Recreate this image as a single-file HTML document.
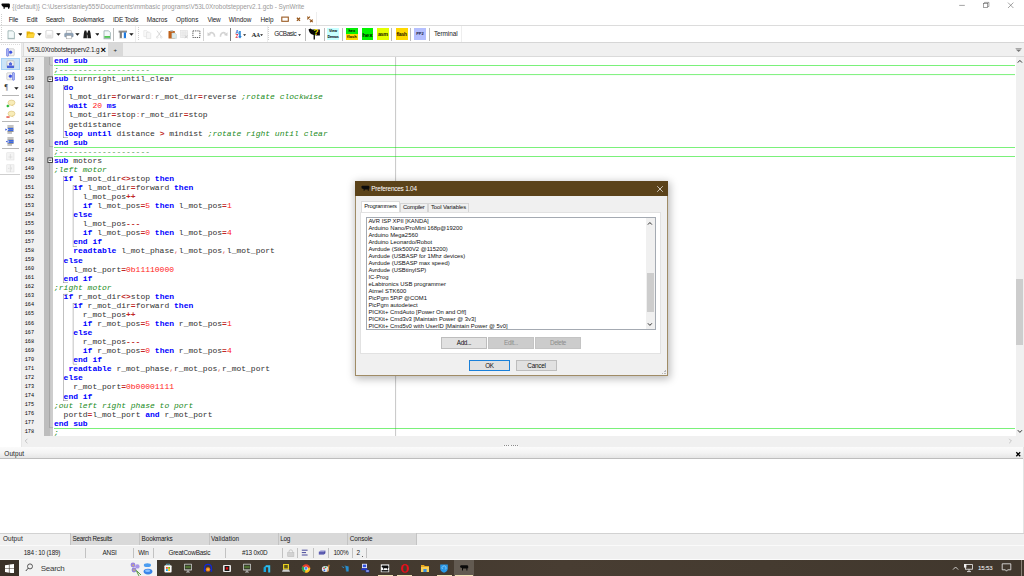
<!DOCTYPE html>
<html><head><meta charset="utf-8"><title>SynWrite</title>
<style>
html,body{margin:0;padding:0;}
body{width:1024px;height:576px;overflow:hidden;background:#fff;position:relative;font-family:"Liberation Sans",sans-serif;}
div,span.t,svg{position:absolute;}
div{box-sizing:border-box;}
span.t{white-space:pre;}
.code span{white-space:pre;}
.k{color:#0000ff;font-weight:bold;}
.c{color:#228b22;font-style:italic;}
.n{color:#ff2020;}
.o{color:#c02828;font-weight:bold;}
.p{color:#e46868;}
.i{color:#303030;}
</style></head><body>
<div style="left:0.00px;top:0.00px;width:1024.00px;height:12.00px;background:#ffffff;"></div>
<svg style="left:1px;top:2.6px" width="9.4" height="6.4" viewBox="0 0 9.4 6.4"><path d="M0.3 1 L1.4 0.4 H8.2 L8.9 1.2 V4.4 H8.3 V5.7 H7 V4.3 H3.8 V5.7 H2.5 V3.9 L1 3 Z" fill="#080808"/></svg>
<span class="t " style="left:12.30px;top:2.56px;font-size:6.4px;line-height:7.68px;color:#9a9a9a;letter-spacing:-0.013px;">{(default)} C:\Users\stanley555\Documents\mmbasic programs\V53L0Xrobotstepperv2.1.gcb - SynWrite</span>
<svg style="left:950px;top:0" width="74" height="12" viewBox="0 0 74 12"><g stroke="#666" stroke-width="0.6" fill="none"><path d="M9.2 5.4 H14.8"/><rect x="33.3" y="3.4" width="4.4" height="4.2"/><path d="M34.5 3.4 V2.4 H38.9 V6.5 H37.7"/><path d="M58 2.6 L63.4 8 M63.4 2.6 L58 8"/></g></svg>
<div style="left:0.00px;top:12.00px;width:1024.00px;height:13.50px;background:#ffffff;"></div>
<div style="left:0.00px;top:25.20px;width:1024.00px;height:0.70px;background:#dcdcdc;"></div>
<div style="left:1.20px;top:14.00px;width:0.60px;height:0.70px;background:#d0d0d0;"></div>
<div style="left:1.20px;top:16.00px;width:0.60px;height:0.70px;background:#d0d0d0;"></div>
<div style="left:1.20px;top:18.00px;width:0.60px;height:0.70px;background:#d0d0d0;"></div>
<div style="left:1.20px;top:20.00px;width:0.60px;height:0.70px;background:#d0d0d0;"></div>
<div style="left:1.20px;top:22.00px;width:0.60px;height:0.70px;background:#d0d0d0;"></div>
<div style="left:1.20px;top:24.00px;width:0.60px;height:0.70px;background:#d0d0d0;"></div>
<span class="t " style="left:8.70px;top:15.66px;font-size:6.4px;line-height:7.68px;color:#1a1a1a;letter-spacing:-0.228px;">File</span>
<span class="t " style="left:26.80px;top:15.66px;font-size:6.4px;line-height:7.68px;color:#1a1a1a;letter-spacing:-0.057px;">Edit</span>
<span class="t " style="left:45.80px;top:15.66px;font-size:6.4px;line-height:7.68px;color:#1a1a1a;letter-spacing:-0.313px;">Search</span>
<span class="t " style="left:72.80px;top:15.66px;font-size:6.4px;line-height:7.68px;color:#1a1a1a;letter-spacing:-0.057px;">Bookmarks</span>
<span class="t " style="left:113.00px;top:15.66px;font-size:6.4px;line-height:7.68px;color:#1a1a1a;letter-spacing:-0.230px;">IDE Tools</span>
<span class="t " style="left:146.80px;top:15.66px;font-size:6.4px;line-height:7.68px;color:#1a1a1a;letter-spacing:-0.080px;">Macros</span>
<span class="t " style="left:176.00px;top:15.66px;font-size:6.4px;line-height:7.68px;color:#1a1a1a;letter-spacing:0.063px;">Options</span>
<span class="t " style="left:207.50px;top:15.66px;font-size:6.4px;line-height:7.68px;color:#1a1a1a;letter-spacing:-0.189px;">View</span>
<span class="t " style="left:228.80px;top:15.66px;font-size:6.4px;line-height:7.68px;color:#1a1a1a;letter-spacing:-0.011px;">Window</span>
<span class="t " style="left:260.50px;top:15.66px;font-size:6.4px;line-height:7.68px;color:#1a1a1a;letter-spacing:-0.041px;">Help</span>
<svg style="left:281px;top:14px" width="36" height="11" viewBox="0 0 36 11"><rect x="0.8" y="3.1" width="6.5" height="4.2" fill="#fff" stroke="#9a5a22" stroke-width="1.1"/><path d="M15.9 3.8 L19 6.9 M19 3.8 L15.9 6.9" stroke="#96561a" stroke-width="1.3"/><path d="M26.3 2.7 L28.9 5.3 M28.9 2.7 L26.3 5.3 M29.1 5.6 L31.7 8.2 M31.7 5.6 L29.1 8.2" stroke="#96561a" stroke-width="1.15"/></svg>
<div style="left:316.00px;top:12.00px;width:1.00px;height:13.00px;background:#eeeeee;"></div>
<div style="left:0.00px;top:26.00px;width:1024.00px;height:16.40px;background:#ffffff;"></div>
<div style="left:0.00px;top:42.00px;width:1024.00px;height:1.00px;background:#d6d6d6;"></div>
<div style="left:1.20px;top:27.00px;width:0.60px;height:0.70px;background:#d0d0d0;"></div>
<div style="left:1.20px;top:29.00px;width:0.60px;height:0.70px;background:#d0d0d0;"></div>
<div style="left:1.20px;top:31.00px;width:0.60px;height:0.70px;background:#d0d0d0;"></div>
<div style="left:1.20px;top:33.00px;width:0.60px;height:0.70px;background:#d0d0d0;"></div>
<div style="left:1.20px;top:35.00px;width:0.60px;height:0.70px;background:#d0d0d0;"></div>
<div style="left:1.20px;top:37.00px;width:0.60px;height:0.70px;background:#d0d0d0;"></div>
<div style="left:1.20px;top:39.00px;width:0.60px;height:0.70px;background:#d0d0d0;"></div>
<div style="left:137.50px;top:27.00px;width:0.60px;height:0.70px;background:#d0d0d0;"></div>
<div style="left:137.50px;top:29.00px;width:0.60px;height:0.70px;background:#d0d0d0;"></div>
<div style="left:137.50px;top:31.00px;width:0.60px;height:0.70px;background:#d0d0d0;"></div>
<div style="left:137.50px;top:33.00px;width:0.60px;height:0.70px;background:#d0d0d0;"></div>
<div style="left:137.50px;top:35.00px;width:0.60px;height:0.70px;background:#d0d0d0;"></div>
<div style="left:137.50px;top:37.00px;width:0.60px;height:0.70px;background:#d0d0d0;"></div>
<div style="left:137.50px;top:39.00px;width:0.60px;height:0.70px;background:#d0d0d0;"></div>
<div style="left:135.00px;top:26.00px;width:1.00px;height:16.00px;background:#eeeeee;"></div>
<div style="left:268.30px;top:27.00px;width:0.60px;height:0.70px;background:#d0d0d0;"></div>
<div style="left:268.30px;top:29.00px;width:0.60px;height:0.70px;background:#d0d0d0;"></div>
<div style="left:268.30px;top:31.00px;width:0.60px;height:0.70px;background:#d0d0d0;"></div>
<div style="left:268.30px;top:33.00px;width:0.60px;height:0.70px;background:#d0d0d0;"></div>
<div style="left:268.30px;top:35.00px;width:0.60px;height:0.70px;background:#d0d0d0;"></div>
<div style="left:268.30px;top:37.00px;width:0.60px;height:0.70px;background:#d0d0d0;"></div>
<div style="left:268.30px;top:39.00px;width:0.60px;height:0.70px;background:#d0d0d0;"></div>
<div style="left:266.50px;top:26.00px;width:1.00px;height:16.00px;background:#eeeeee;"></div>
<div style="left:113.30px;top:28.00px;width:0.70px;height:12.50px;background:#bcbcbc;"></div>
<div style="left:304.50px;top:28.00px;width:0.70px;height:12.50px;background:#bcbcbc;"></div>
<div style="left:323.50px;top:28.00px;width:0.70px;height:12.50px;background:#bcbcbc;"></div>
<div style="left:342.00px;top:28.00px;width:0.70px;height:12.50px;background:#bcbcbc;"></div>
<div style="left:391.30px;top:28.00px;width:0.70px;height:12.50px;background:#bcbcbc;"></div>
<div style="left:410.20px;top:28.00px;width:0.70px;height:12.50px;background:#bcbcbc;"></div>
<div style="left:428.80px;top:28.00px;width:0.70px;height:12.50px;background:#bcbcbc;"></div>
<div style="left:202.50px;top:28.00px;width:0.70px;height:12.50px;background:#d2d2d2;"></div>
<div style="left:230.10px;top:28.00px;width:0.70px;height:12.50px;background:#808080;"></div>
<svg style="left:17.60px;top:33.00px" width="4.8" height="3" viewBox="0 0 4.8 3"><path d="M0.2 0.3 H4.6 L2.4 2.7 Z" fill="#1a1a1a"/></svg>
<svg style="left:36.80px;top:33.00px" width="4.8" height="3" viewBox="0 0 4.8 3"><path d="M0.2 0.3 H4.6 L2.4 2.7 Z" fill="#1a1a1a"/></svg>
<svg style="left:56.00px;top:33.00px" width="4.8" height="3" viewBox="0 0 4.8 3"><path d="M0.2 0.3 H4.6 L2.4 2.7 Z" fill="#1a1a1a"/></svg>
<svg style="left:75.20px;top:33.00px" width="4.8" height="3" viewBox="0 0 4.8 3"><path d="M0.2 0.3 H4.6 L2.4 2.7 Z" fill="#1a1a1a"/></svg>
<svg style="left:94.50px;top:33.00px" width="4.8" height="3" viewBox="0 0 4.8 3"><path d="M0.2 0.3 H4.6 L2.4 2.7 Z" fill="#1a1a1a"/></svg>
<svg style="left:129.00px;top:33.00px" width="4.8" height="3" viewBox="0 0 4.8 3"><path d="M0.2 0.3 H4.6 L2.4 2.7 Z" fill="#1a1a1a"/></svg>
<svg style="left:243.40px;top:33.50px" width="3.2" height="2" viewBox="0 0 3.2 2"><path d="M0.1 0.2 H3.1 L1.6 1.9 Z" fill="#1a1a1a"/></svg>
<svg style="left:260.00px;top:33.50px" width="3.2" height="2" viewBox="0 0 3.2 2"><path d="M0.1 0.2 H3.1 L1.6 1.9 Z" fill="#1a1a1a"/></svg>
<svg style="left:298.20px;top:33.50px" width="3.2" height="2" viewBox="0 0 3.2 2"><path d="M0.1 0.2 H3.1 L1.6 1.9 Z" fill="#1a1a1a"/></svg>
<div style="left:461.00px;top:26.00px;width:1.00px;height:16.00px;background:#eeeeee;"></div>
<svg style="left:6.50px;top:29.50px" width="9" height="10" viewBox="0 0 9 10"><path d="M1 0.8 H5.6 L7.4 2.6 V8.4 H1 Z" fill="#f2f9f9" stroke="#86a2a2" stroke-width="0.7"/><path d="M0.4 8.8 H8" stroke="#9cb0b0" stroke-width="0.7"/></svg>
<svg style="left:25.50px;top:30.00px" width="10" height="9" viewBox="0 0 10 9"><path d="M0.6 1.4 H3.6 L4.4 2.2 H7.6 V7.6 H0.6 Z" fill="#e8b000"/><path d="M0.6 7.6 L2.2 3.6 H8.8 L7.6 7.6 Z" fill="#ffd83a" stroke="#d9a400" stroke-width="0.3"/></svg>
<svg style="left:44.50px;top:30.00px" width="9" height="9" viewBox="0 0 9 9"><rect x="0.8" y="0.6" width="7" height="7.4" rx="0.6" fill="#f4f4f4" stroke="#c8c8c8" stroke-width="0.6"/><rect x="2.2" y="5" width="4.2" height="3" fill="#e2e2e2"/><rect x="2" y="0.9" width="4.6" height="2.6" fill="#ffffff"/></svg>
<svg style="left:63.50px;top:29.50px" width="10" height="10" viewBox="0 0 10 10"><rect x="2.6" y="0.8" width="4.6" height="3" fill="#fff" stroke="#999" stroke-width="0.5"/><rect x="0.6" y="3.2" width="8.6" height="3.8" rx="0.8" fill="#8fa3b8" stroke="#70839a" stroke-width="0.4"/><rect x="2.4" y="5.6" width="5" height="3.2" fill="#fff" stroke="#999" stroke-width="0.5"/></svg>
<svg style="left:83.30px;top:29.60px" width="9" height="9" viewBox="0 0 9 9"><path d="M0.3 8.2 L0.9 3 L1.6 0.5 H3.3 L3.9 3 V8.2 Z M4.5 8.2 V3 L5.1 0.5 H6.8 L7.5 3 L8.1 8.2 Z" fill="#1c1c1c"/><rect x="3.4" y="2.8" width="1.6" height="2.4" fill="#333"/></svg>
<svg style="left:102.50px;top:29.50px" width="9" height="10" viewBox="0 0 9 10"><path d="M1 0.8 H5.6 L7.4 2.6 V8.4 H1 Z" fill="#f2f9f9" stroke="#86a2a2" stroke-width="0.7"/><rect x="1.4" y="6.3" width="5.6" height="1.3" fill="#10b010"/><path d="M0.4 8.8 H8" stroke="#9cb0b0" stroke-width="0.7"/></svg>
<svg style="left:117.60px;top:29.60px" width="10" height="9" viewBox="0 0 10 9"><path d="M0.6 0.6 H9 V2.6 H0.6 Z" fill="#8c8c8c"/><rect x="1.7" y="2" width="2.2" height="6.2" fill="#7e7e7e"/><rect x="5.8" y="2.4" width="2.2" height="5.8" fill="#1e7ae0"/><path d="M0.8 8.4 H8.8" stroke="#dcdcdc" stroke-width="0.5"/></svg>
<svg style="left:142.50px;top:29.80px" width="9" height="9.4" viewBox="0 0 9 9.4"><path d="M0.8 0.6 H3.8 L5 1.8 V6.6 H0.8 Z" fill="#fafafa" stroke="#dcdcdc" stroke-width="0.5"/><path d="M3.4 2.2 H6.6 L7.8 3.4 V8.6 H3.4 Z" fill="#f6f6f6" stroke="#d6d6d6" stroke-width="0.5"/></svg>
<svg style="left:155.80px;top:29.80px" width="7" height="9" viewBox="0 0 7 9"><path d="M0.9 0.6 L5 6.4 M5.6 0.6 L1.6 6.4" stroke="#cfcfcf" stroke-width="0.8" fill="none"/><circle cx="1.3" cy="7.2" r="0.9" fill="none" stroke="#d4d4d4" stroke-width="0.6"/><circle cx="5.2" cy="7.2" r="0.9" fill="none" stroke="#d4d4d4" stroke-width="0.6"/></svg>
<svg style="left:167.50px;top:29.50px" width="9.4" height="9.6" viewBox="0 0 9.4 9.6"><rect x="0.5" y="0.9" width="6.4" height="7.6" rx="0.5" fill="#c0621a"/><rect x="2.3" y="0.3" width="2.8" height="1.3" fill="#aab4b8"/><path d="M3.8 3 H7 L8.4 4.4 V8.4 H3.8 Z" fill="#dcebeb" stroke="#a9bcbc" stroke-width="0.4"/></svg>
<svg style="left:179.50px;top:29.80px" width="9" height="9.2" viewBox="0 0 9 9.2"><rect x="0.6" y="0.6" width="7" height="7" fill="#f0f0f0" stroke="#dadada" stroke-width="0.5"/><path d="M0.6 3 H7.6 M0.6 5.4 H7.6 M3 0.6 V7.6 M5.4 0.6 V7.6" stroke="#e0e0e0" stroke-width="0.4"/><path d="M4.8 5.6 L7.8 8.2 M7.8 5.6 L4.8 8.2" stroke="#c4c4c4" stroke-width="0.7"/></svg>
<svg style="left:191.60px;top:29.80px" width="9" height="8.6" viewBox="0 0 9 8.6"><rect x="0.9" y="0.9" width="7" height="6.6" fill="#fff" stroke="#333" stroke-width="0.8" stroke-dasharray="1.3 0.9"/></svg>
<svg style="left:206.60px;top:30.40px" width="9" height="8" viewBox="0 0 9 8"><path d="M7.6 6.8 C7.8 2.8 4.6 1.6 2.4 3.6" fill="none" stroke="#d4d4d4" stroke-width="1.6"/><path d="M0.4 2.2 L0.6 6 L4.2 5 Z" fill="#d0d0d0"/></svg>
<svg style="left:219.00px;top:30.40px" width="9" height="8" viewBox="0 0 9 8"><path d="M1.4 6.8 C1.2 2.8 4.4 1.6 6.6 3.6" fill="none" stroke="#d4d4d4" stroke-width="1.6"/><path d="M8.6 2.2 L8.4 6 L4.8 5 Z" fill="#d0d0d0"/></svg>
<svg style="left:235.00px;top:29.60px" width="8" height="9" viewBox="0 0 8 9"><rect x="4.2" y="1" width="1.5" height="6" fill="#1878d0"/><path d="M3.2 6.2 H6.8 L5 8.4 Z" fill="#1878d0"/></svg>
<span class="t " style="left:235.20px;top:29.00px;font-size:5.0px;line-height:6.00px;color:#1a6fd0;font-weight:bold;">A</span>
<span class="t " style="left:235.40px;top:33.00px;font-size:5.0px;line-height:6.00px;color:#d8283c;font-weight:bold;">Z</span>
<span class="t" style="left:251.6px;top:29.9px;font-size:6.8px;line-height:9px;font-family:'Liberation Serif',serif;font-weight:bold;color:#222;letter-spacing:-0.2px">A<span style="font-size:5.2px">A</span></span>
<span class="t " style="left:274.20px;top:30.36px;font-size:6.4px;line-height:7.68px;color:#222;letter-spacing:-0.464px;">GCBasic</span>
<svg style="left:308.40px;top:28.20px" width="13" height="12" viewBox="0 0 13 12"><path d="M0.5 1.4 L2.4 0.6 L4 1.5 H11.9 V7.4 H8.2 L6.9 6.9 V11.5 H5.6 V6.9 L3 5.9 L1.5 4.2 Z" fill="#050505"/></svg>
<span class="t " style="left:313.60px;top:27.88px;font-size:8.2px;line-height:9.84px;color:#f4e400;font-weight:bold;">?</span>
<div style="left:327.00px;top:28.00px;width:12.00px;height:12.00px;background:#c6ffff;"></div>
<span class="t " style="left:329.00px;top:28.92px;font-size:3.8px;line-height:4.56px;color:#000;letter-spacing:-0.098px;font-weight:bold;">View</span>
<span class="t " style="left:327.50px;top:34.52px;font-size:3.8px;line-height:4.56px;color:#000;letter-spacing:-0.294px;font-weight:bold;">Demos</span>
<div style="left:345.90px;top:28.00px;width:12.10px;height:6.40px;background:#04ee04;"></div>
<div style="left:345.90px;top:34.40px;width:12.10px;height:5.60px;background:#ffd800;"></div>
<span class="t " style="left:348.40px;top:28.86px;font-size:3.9px;line-height:4.68px;color:#000;letter-spacing:0.093px;font-weight:bold;">hex</span>
<span class="t " style="left:347.00px;top:34.66px;font-size:3.9px;line-height:4.68px;color:#000;letter-spacing:0.139px;font-weight:bold;">flash</span>
<div style="left:361.50px;top:28.00px;width:11.90px;height:12.00px;background:#00f400;"></div>
<span class="t " style="left:362.20px;top:30.58px;font-size:6.2px;line-height:7.44px;color:#022002;letter-spacing:-0.128px;font-weight:bold;">hex</span>
<div style="left:376.90px;top:28.00px;width:12.00px;height:12.00px;background:#e4ff00;"></div>
<span class="t " style="left:377.90px;top:30.96px;font-size:5.4px;line-height:6.48px;color:#1a2000;letter-spacing:-0.336px;font-weight:bold;">asm</span>
<div style="left:395.60px;top:28.00px;width:12.10px;height:12.00px;background:#ffd800;"></div>
<span class="t " style="left:396.60px;top:31.52px;font-size:4.8px;line-height:5.76px;color:#1a1000;letter-spacing:-0.201px;font-weight:bold;">flash</span>
<div style="left:414.20px;top:28.00px;width:11.90px;height:12.00px;background:#b4bfff;"></div>
<span class="t " style="left:416.20px;top:32.20px;font-size:4.0px;line-height:4.80px;color:#1c2044;letter-spacing:0.013px;font-weight:bold;">PP2</span>
<span class="t " style="left:434.00px;top:30.36px;font-size:6.4px;line-height:7.68px;color:#222;letter-spacing:-0.086px;">Terminal</span>
<div style="left:0.00px;top:42.80px;width:1024.00px;height:13.60px;background:#f0f0f0;"></div>
<div style="left:22.00px;top:56.00px;width:1002.00px;height:1.00px;background:#dadada;"></div>
<div style="left:24.00px;top:43.00px;width:84.00px;height:13.00px;background:#f4f4f4;"></div>
<span class="t " style="left:27.00px;top:46.36px;font-size:6.4px;line-height:7.68px;color:#1a1a1a;letter-spacing:-0.152px;">V53L0Xrobotstepperv2.1.g</span>
<span class="t " style="left:100.60px;top:44.46px;font-size:9.4px;line-height:11.28px;color:#000;font-weight:bold;">×</span>
<div style="left:108.00px;top:43.00px;width:14.60px;height:13.00px;background:#d9d9d9;"></div>
<span class="t " style="left:113.60px;top:46.70px;font-size:6px;line-height:7.20px;color:#222;">+</span>
<svg style="left:1015.40px;top:47.60px" width="8" height="5" viewBox="0 0 8 5"><path d="M0.6 0.5 H6.6" stroke="#777" stroke-width="0.6"/><path d="M0.8 1.4 H6.4 L3.6 4 Z" fill="#777"/></svg>
<div style="left:0.00px;top:42.80px;width:21.40px;height:404.00px;background:#ffffff;"></div>
<div style="left:21.00px;top:43.00px;width:1.00px;height:404.00px;background:#e6e6e6;"></div>
<div style="left:22.00px;top:43.00px;width:2.00px;height:13.00px;background:#ececec;"></div>
<div style="left:23.00px;top:43.00px;width:1.00px;height:13.40px;background:#dcdcdc;"></div>
<div style="left:1.20px;top:44.00px;width:0.80px;height:1.00px;background:#dcdcdc;"></div>
<div style="left:3.20px;top:44.00px;width:0.80px;height:1.00px;background:#dcdcdc;"></div>
<div style="left:5.20px;top:44.00px;width:0.80px;height:1.00px;background:#dcdcdc;"></div>
<div style="left:7.20px;top:44.00px;width:0.80px;height:1.00px;background:#dcdcdc;"></div>
<div style="left:9.20px;top:44.00px;width:0.80px;height:1.00px;background:#dcdcdc;"></div>
<div style="left:11.20px;top:44.00px;width:0.80px;height:1.00px;background:#dcdcdc;"></div>
<div style="left:13.20px;top:44.00px;width:0.80px;height:1.00px;background:#dcdcdc;"></div>
<div style="left:15.20px;top:44.00px;width:0.80px;height:1.00px;background:#dcdcdc;"></div>
<div style="left:17.20px;top:44.00px;width:0.80px;height:1.00px;background:#dcdcdc;"></div>
<div style="left:19.20px;top:44.00px;width:0.80px;height:1.00px;background:#dcdcdc;"></div>
<div style="left:1.30px;top:58.40px;width:18.80px;height:11.70px;background:#cce4f7;border:0.6px solid #a8d2f5;"></div>
<svg style="left:6.00px;top:48.00px" width="9" height="9" viewBox="0 0 9 9"><rect x="1.6" y="0.8" width="6.6" height="7" rx="0.8" fill="#f2f2f2" stroke="#b8b8b8" stroke-width="0.6"/><rect x="0.6" y="0.6" width="1.8" height="7.6" rx="0.6" fill="#b8c4f8" stroke="#4a5ad8" stroke-width="0.6"/><path d="M3.2 3 H4.6 V2 L6.6 4.3 L4.6 6.6 V5.6 H3.2 Z" fill="#3a50e0"/></svg>
<svg style="left:6.00px;top:60.10px" width="9" height="9" viewBox="0 0 9 9"><rect x="1" y="0.8" width="7" height="7" rx="0.8" fill="#f2f2f2" stroke="#b0b0b0" stroke-width="0.6"/><rect x="1" y="5.6" width="7" height="2.4" fill="#4a62d8"/><path d="M3 5.4 V3.8 H2.4 L4.5 2 L6.6 3.8 H6 V5.4 Z" fill="#5468dc"/></svg>
<svg style="left:6.00px;top:71.70px" width="9" height="9" viewBox="0 0 9 9"><rect x="0.8" y="0.8" width="6.6" height="7" rx="0.8" fill="#f2f2f2" stroke="#b8b8b8" stroke-width="0.6"/><rect x="6.6" y="0.6" width="1.8" height="7.6" rx="0.6" fill="#b8c4f8" stroke="#4a5ad8" stroke-width="0.6"/><path d="M5.8 3 H4.4 V2 L2.4 4.3 L4.4 6.6 V5.6 H5.8 Z" fill="#3a50e0"/></svg>
<span class="t" style="left:4.6px;top:82.6px;font-size:7.6px;line-height:10px;font-family:'Liberation Serif',serif;color:#333">¶</span>
<svg style="left:14.20px;top:86.50px" width="4.8" height="3" viewBox="0 0 4.8 3"><path d="M0.2 0.3 H4.6 L2.4 2.7 Z" fill="#1a1a1a"/></svg>
<div style="left:2.20px;top:95.40px;width:17.00px;height:0.70px;background:#b8b8b8;"></div>
<div style="left:2.20px;top:121.30px;width:17.00px;height:0.70px;background:#b8b8b8;"></div>
<div style="left:2.20px;top:148.00px;width:17.00px;height:0.70px;background:#b8b8b8;"></div>
<svg style="left:4.60px;top:98.60px" width="11" height="10" viewBox="0 0 11 10"><ellipse cx="6.5" cy="3.7" rx="3.5" ry="2.6" fill="#f8ecb8" stroke="#d0b468" stroke-width="0.5"/><path d="M7.4 5.8 L8.8 7.6 L5.8 6.2 Z" fill="#e4cc84"/><path d="M1.2 6.9 L2.9 5.4 L4.6 6.9 L2.9 8.4 Z" fill="#22b830"/></svg>
<svg style="left:4.60px;top:109.60px" width="11" height="10" viewBox="0 0 11 10"><ellipse cx="6.5" cy="3.7" rx="3.5" ry="2.6" fill="#f8ecb8" stroke="#d0b468" stroke-width="0.5"/><path d="M7.4 5.8 L8.8 7.6 L5.8 6.2 Z" fill="#e4cc84"/><rect x="1.4" y="6.4" width="3.2" height="1.3" fill="#e03a28"/></svg>
<svg style="left:5.00px;top:124.70px" width="10" height="9.4" viewBox="0 0 10 9.4"><path d="M2.4 1 H8.6 M2.4 2.8 H8.6 M3.8 4.6 H8.6 M2.4 6.4 H8.6 M2.4 8 H7" stroke="#555" stroke-width="0.7"/><path d="M2.8 3.6 H8.4 M2.8 5.4 H8.4" stroke="#3a68e8" stroke-width="1.1"/><path d="M0.4 3.4 L2.2 4.6 L0.4 5.8 Z" fill="#2a4ad0"/></svg>
<svg style="left:5.00px;top:136.60px" width="10" height="9.4" viewBox="0 0 10 9.4"><path d="M2.4 1 H8.6 M2.4 2.8 H8.6 M3.8 4.6 H8.6 M2.4 6.4 H8.6 M2.4 8 H7" stroke="#555" stroke-width="0.7"/><path d="M3.4 3.6 H8.6 M3.4 5.4 H8.6" stroke="#3a68e8" stroke-width="1.1"/><path d="M2.6 3.4 L0.8 4.6 L2.6 5.8 Z" fill="#2a4ad0"/></svg>
<svg style="left:6.00px;top:151.80px" width="9" height="9" viewBox="0 0 9 9"><rect x="0.8" y="0.8" width="7.2" height="7.2" fill="#f4f4f4" stroke="#dadada" stroke-width="0.5"/><path d="M4.4 2 V6.6 M2.4 5 H6.4" stroke="#d4d4d4" stroke-width="0.6"/></svg>
<svg style="left:6.00px;top:163.60px" width="9" height="9" viewBox="0 0 9 9"><rect x="0.8" y="0.8" width="7.2" height="7.2" fill="#f4f4f4" stroke="#dadada" stroke-width="0.5"/><path d="M4.4 0.8 V8 M2 4.4 H3.4 M5.4 3.4 V5.4" stroke="#d4d4d4" stroke-width="0.6"/></svg>
<div style="left:0.00px;top:174.00px;width:19.60px;height:0.60px;background:#cfcfcf;"></div>
<div style="left:22.10px;top:56.60px;width:22.30px;height:379.40px;background:#f0f0f0;"></div>
<div style="left:44.40px;top:56.60px;width:5.20px;height:379.40px;background:#bdbdbd;"></div>
<div style="left:49.60px;top:56.60px;width:3.20px;height:379.40px;background:#cdcdcd;"></div>
<div style="left:52.80px;top:56.60px;width:962.60px;height:379.40px;background:#ffffff;"></div>
<div style="left:395.00px;top:56.60px;width:1.00px;height:379.40px;background:rgba(150,150,150,0.495);"></div>
<div style="left:396.00px;top:56.60px;width:1.00px;height:379.40px;background:rgba(150,150,150,0.045);"></div>
<div style="left:1015.50px;top:56.60px;width:8.50px;height:379.40px;background:#f0f0f0;"></div>
<div style="left:1016.00px;top:279.00px;width:7.40px;height:65.60px;background:#cdcdcd;"></div>
<svg style="left:1016.60px;top:58.80px" width="6" height="5" viewBox="0 0 6 5"><path d="M0.8 3.6 L2.9 1.4 L5 3.6" fill="none" stroke="#333" stroke-width="1"/></svg>
<svg style="left:1016.60px;top:428.80px" width="6" height="5" viewBox="0 0 6 5"><path d="M0.8 1.2 L2.9 3.4 L5 1.2" fill="none" stroke="#333" stroke-width="1"/></svg>
<span class="t" style="left:24.7px;top:57.60px;font-size:5.2px;line-height:7px;font-family:'Liberation Mono',monospace;color:#000;letter-spacing:0.02px">137</span>
<span class="t code" style="left:54.00px;top:56.05px;font-size:8px;line-height:9.0667px;font-family:'Liberation Mono',monospace;"><span class="k">end sub</span></span>
<div style="left:54.00px;top:65.00px;width:961.20px;height:1.00px;background:rgba(0,228,0,0.520);"></div>
<span class="t" style="left:24.7px;top:66.67px;font-size:5.2px;line-height:7px;font-family:'Liberation Mono',monospace;color:#000;letter-spacing:0.02px">138</span>
<span class="t code" style="left:54.00px;top:65.12px;font-size:8px;line-height:9.0667px;font-family:'Liberation Mono',monospace;"><span class="c">;-------------------</span></span>
<div style="left:54.00px;top:74.00px;width:961.20px;height:1.00px;background:rgba(0,228,0,0.477);"></div>
<div style="left:54.00px;top:75.00px;width:961.20px;height:1.00px;background:rgba(0,228,0,0.043);"></div>
<span class="t" style="left:24.7px;top:75.73px;font-size:5.2px;line-height:7px;font-family:'Liberation Mono',monospace;color:#000;letter-spacing:0.02px">139</span>
<span class="t code" style="left:54.00px;top:74.18px;font-size:8px;line-height:9.0667px;font-family:'Liberation Mono',monospace;"><span class="k">sub</span><span class="i"> turnright_until_clear</span></span>
<span class="t" style="left:24.7px;top:84.80px;font-size:5.2px;line-height:7px;font-family:'Liberation Mono',monospace;color:#000;letter-spacing:0.02px">140</span>
<span class="t code" style="left:63.60px;top:83.25px;font-size:8px;line-height:9.0667px;font-family:'Liberation Mono',monospace;"><span class="k">do</span></span>
<span class="t" style="left:24.7px;top:93.87px;font-size:5.2px;line-height:7px;font-family:'Liberation Mono',monospace;color:#000;letter-spacing:0.02px">141</span>
<span class="t code" style="left:68.40px;top:92.32px;font-size:8px;line-height:9.0667px;font-family:'Liberation Mono',monospace;"><span class="i">l_mot_dir</span><span class="o">=</span><span class="i">forward</span><span class="p">:</span><span class="i">r_mot_dir</span><span class="o">=</span><span class="i">reverse </span><span class="c">;rotate clockwise</span></span>
<span class="t" style="left:24.7px;top:102.93px;font-size:5.2px;line-height:7px;font-family:'Liberation Mono',monospace;color:#000;letter-spacing:0.02px">142</span>
<span class="t code" style="left:68.40px;top:101.38px;font-size:8px;line-height:9.0667px;font-family:'Liberation Mono',monospace;"><span class="k">wait </span><span class="n">20</span><span class="k"> ms</span></span>
<span class="t" style="left:24.7px;top:112.00px;font-size:5.2px;line-height:7px;font-family:'Liberation Mono',monospace;color:#000;letter-spacing:0.02px">143</span>
<span class="t code" style="left:68.40px;top:110.45px;font-size:8px;line-height:9.0667px;font-family:'Liberation Mono',monospace;"><span class="i">l_mot_dir</span><span class="o">=</span><span class="i">stop</span><span class="p">:</span><span class="i">r_mot_dir</span><span class="o">=</span><span class="i">stop</span></span>
<span class="t" style="left:24.7px;top:121.07px;font-size:5.2px;line-height:7px;font-family:'Liberation Mono',monospace;color:#000;letter-spacing:0.02px">144</span>
<span class="t code" style="left:68.40px;top:119.52px;font-size:8px;line-height:9.0667px;font-family:'Liberation Mono',monospace;"><span class="i">getdistance</span></span>
<span class="t" style="left:24.7px;top:130.13px;font-size:5.2px;line-height:7px;font-family:'Liberation Mono',monospace;color:#000;letter-spacing:0.02px">145</span>
<span class="t code" style="left:63.60px;top:128.58px;font-size:8px;line-height:9.0667px;font-family:'Liberation Mono',monospace;"><span class="k">loop until</span><span class="i"> distance </span><span class="o">&gt;</span><span class="i"> mindist </span><span class="c">;rotate right until clear</span></span>
<span class="t" style="left:24.7px;top:139.20px;font-size:5.2px;line-height:7px;font-family:'Liberation Mono',monospace;color:#000;letter-spacing:0.02px">146</span>
<span class="t code" style="left:54.00px;top:137.65px;font-size:8px;line-height:9.0667px;font-family:'Liberation Mono',monospace;"><span class="k">end sub</span></span>
<div style="left:54.00px;top:147.00px;width:961.20px;height:1.00px;background:rgba(0,228,0,0.520);"></div>
<span class="t" style="left:24.7px;top:148.27px;font-size:5.2px;line-height:7px;font-family:'Liberation Mono',monospace;color:#000;letter-spacing:0.02px">147</span>
<span class="t code" style="left:54.00px;top:146.72px;font-size:8px;line-height:9.0667px;font-family:'Liberation Mono',monospace;"><span class="c">;-------------------</span></span>
<div style="left:54.00px;top:156.00px;width:961.20px;height:1.00px;background:rgba(0,228,0,0.520);"></div>
<span class="t" style="left:24.7px;top:157.33px;font-size:5.2px;line-height:7px;font-family:'Liberation Mono',monospace;color:#000;letter-spacing:0.02px">148</span>
<span class="t code" style="left:54.00px;top:155.78px;font-size:8px;line-height:9.0667px;font-family:'Liberation Mono',monospace;"><span class="k">sub</span><span class="i"> motors</span></span>
<span class="t" style="left:24.7px;top:166.40px;font-size:5.2px;line-height:7px;font-family:'Liberation Mono',monospace;color:#000;letter-spacing:0.02px">149</span>
<span class="t code" style="left:54.00px;top:164.85px;font-size:8px;line-height:9.0667px;font-family:'Liberation Mono',monospace;"><span class="c">;left motor</span></span>
<span class="t" style="left:24.7px;top:175.47px;font-size:5.2px;line-height:7px;font-family:'Liberation Mono',monospace;color:#000;letter-spacing:0.02px">150</span>
<span class="t code" style="left:63.60px;top:173.92px;font-size:8px;line-height:9.0667px;font-family:'Liberation Mono',monospace;"><span class="k">if</span><span class="i"> l_mot_dir</span><span class="o">&lt;&gt;</span><span class="i">stop </span><span class="k">then</span></span>
<span class="t" style="left:24.7px;top:184.53px;font-size:5.2px;line-height:7px;font-family:'Liberation Mono',monospace;color:#000;letter-spacing:0.02px">151</span>
<span class="t code" style="left:73.20px;top:182.98px;font-size:8px;line-height:9.0667px;font-family:'Liberation Mono',monospace;"><span class="k">if</span><span class="i"> l_mot_dir</span><span class="o">=</span><span class="i">forward </span><span class="k">then</span></span>
<span class="t" style="left:24.7px;top:193.60px;font-size:5.2px;line-height:7px;font-family:'Liberation Mono',monospace;color:#000;letter-spacing:0.02px">152</span>
<span class="t code" style="left:82.80px;top:192.05px;font-size:8px;line-height:9.0667px;font-family:'Liberation Mono',monospace;"><span class="i">l_mot_pos</span><span class="o">++</span></span>
<span class="t" style="left:24.7px;top:202.67px;font-size:5.2px;line-height:7px;font-family:'Liberation Mono',monospace;color:#000;letter-spacing:0.02px">153</span>
<span class="t code" style="left:82.80px;top:201.12px;font-size:8px;line-height:9.0667px;font-family:'Liberation Mono',monospace;"><span class="k">if</span><span class="i"> l_mot_pos</span><span class="o">=</span><span class="n">5</span><span class="k"> then</span><span class="i"> l_mot_pos</span><span class="o">=</span><span class="n">1</span></span>
<span class="t" style="left:24.7px;top:211.73px;font-size:5.2px;line-height:7px;font-family:'Liberation Mono',monospace;color:#000;letter-spacing:0.02px">154</span>
<span class="t code" style="left:73.20px;top:210.18px;font-size:8px;line-height:9.0667px;font-family:'Liberation Mono',monospace;"><span class="k">else</span></span>
<span class="t" style="left:24.7px;top:220.80px;font-size:5.2px;line-height:7px;font-family:'Liberation Mono',monospace;color:#000;letter-spacing:0.02px">155</span>
<span class="t code" style="left:82.80px;top:219.25px;font-size:8px;line-height:9.0667px;font-family:'Liberation Mono',monospace;"><span class="i">l_mot_pos</span><span class="o">---</span></span>
<span class="t" style="left:24.7px;top:229.87px;font-size:5.2px;line-height:7px;font-family:'Liberation Mono',monospace;color:#000;letter-spacing:0.02px">156</span>
<span class="t code" style="left:82.80px;top:228.32px;font-size:8px;line-height:9.0667px;font-family:'Liberation Mono',monospace;"><span class="k">if</span><span class="i"> l_mot_pos</span><span class="o">=</span><span class="n">0</span><span class="k"> then</span><span class="i"> l_mot_pos</span><span class="o">=</span><span class="n">4</span></span>
<span class="t" style="left:24.7px;top:238.93px;font-size:5.2px;line-height:7px;font-family:'Liberation Mono',monospace;color:#000;letter-spacing:0.02px">157</span>
<span class="t code" style="left:73.20px;top:237.38px;font-size:8px;line-height:9.0667px;font-family:'Liberation Mono',monospace;"><span class="k">end if</span></span>
<span class="t" style="left:24.7px;top:248.00px;font-size:5.2px;line-height:7px;font-family:'Liberation Mono',monospace;color:#000;letter-spacing:0.02px">158</span>
<span class="t code" style="left:73.20px;top:246.45px;font-size:8px;line-height:9.0667px;font-family:'Liberation Mono',monospace;"><span class="k">readtable</span><span class="i"> l_mot_phase</span><span class="p">,</span><span class="i">l_mot_pos</span><span class="p">,</span><span class="i">l_mot_port</span></span>
<span class="t" style="left:24.7px;top:257.07px;font-size:5.2px;line-height:7px;font-family:'Liberation Mono',monospace;color:#000;letter-spacing:0.02px">159</span>
<span class="t code" style="left:63.60px;top:255.52px;font-size:8px;line-height:9.0667px;font-family:'Liberation Mono',monospace;"><span class="k">else</span></span>
<span class="t" style="left:24.7px;top:266.13px;font-size:5.2px;line-height:7px;font-family:'Liberation Mono',monospace;color:#000;letter-spacing:0.02px">160</span>
<span class="t code" style="left:73.20px;top:264.58px;font-size:8px;line-height:9.0667px;font-family:'Liberation Mono',monospace;"><span class="i">l_mot_port</span><span class="o">=</span><span class="n">0b11110000</span></span>
<span class="t" style="left:24.7px;top:275.20px;font-size:5.2px;line-height:7px;font-family:'Liberation Mono',monospace;color:#000;letter-spacing:0.02px">161</span>
<span class="t code" style="left:63.60px;top:273.65px;font-size:8px;line-height:9.0667px;font-family:'Liberation Mono',monospace;"><span class="k">end if</span></span>
<span class="t" style="left:24.7px;top:284.27px;font-size:5.2px;line-height:7px;font-family:'Liberation Mono',monospace;color:#000;letter-spacing:0.02px">162</span>
<span class="t code" style="left:54.00px;top:282.72px;font-size:8px;line-height:9.0667px;font-family:'Liberation Mono',monospace;"><span class="c">;right motor</span></span>
<span class="t" style="left:24.7px;top:293.33px;font-size:5.2px;line-height:7px;font-family:'Liberation Mono',monospace;color:#000;letter-spacing:0.02px">163</span>
<span class="t code" style="left:63.60px;top:291.78px;font-size:8px;line-height:9.0667px;font-family:'Liberation Mono',monospace;"><span class="k">if</span><span class="i"> r_mot_dir</span><span class="o">&lt;&gt;</span><span class="i">stop </span><span class="k">then</span></span>
<span class="t" style="left:24.7px;top:302.40px;font-size:5.2px;line-height:7px;font-family:'Liberation Mono',monospace;color:#000;letter-spacing:0.02px">164</span>
<span class="t code" style="left:73.20px;top:300.85px;font-size:8px;line-height:9.0667px;font-family:'Liberation Mono',monospace;"><span class="k">if</span><span class="i"> r_mot_dir</span><span class="o">=</span><span class="i">forward </span><span class="k">then</span></span>
<span class="t" style="left:24.7px;top:311.47px;font-size:5.2px;line-height:7px;font-family:'Liberation Mono',monospace;color:#000;letter-spacing:0.02px">165</span>
<span class="t code" style="left:82.80px;top:309.92px;font-size:8px;line-height:9.0667px;font-family:'Liberation Mono',monospace;"><span class="i">r_mot_pos</span><span class="o">++</span></span>
<span class="t" style="left:24.7px;top:320.53px;font-size:5.2px;line-height:7px;font-family:'Liberation Mono',monospace;color:#000;letter-spacing:0.02px">166</span>
<span class="t code" style="left:82.80px;top:318.98px;font-size:8px;line-height:9.0667px;font-family:'Liberation Mono',monospace;"><span class="k">if</span><span class="i"> r_mot_pos</span><span class="o">=</span><span class="n">5</span><span class="k"> then</span><span class="i"> r_mot_pos</span><span class="o">=</span><span class="n">1</span></span>
<span class="t" style="left:24.7px;top:329.60px;font-size:5.2px;line-height:7px;font-family:'Liberation Mono',monospace;color:#000;letter-spacing:0.02px">167</span>
<span class="t code" style="left:73.20px;top:328.05px;font-size:8px;line-height:9.0667px;font-family:'Liberation Mono',monospace;"><span class="k">else</span></span>
<span class="t" style="left:24.7px;top:338.67px;font-size:5.2px;line-height:7px;font-family:'Liberation Mono',monospace;color:#000;letter-spacing:0.02px">168</span>
<span class="t code" style="left:82.80px;top:337.12px;font-size:8px;line-height:9.0667px;font-family:'Liberation Mono',monospace;"><span class="i">r_mot_pos</span><span class="o">---</span></span>
<span class="t" style="left:24.7px;top:347.73px;font-size:5.2px;line-height:7px;font-family:'Liberation Mono',monospace;color:#000;letter-spacing:0.02px">169</span>
<span class="t code" style="left:82.80px;top:346.18px;font-size:8px;line-height:9.0667px;font-family:'Liberation Mono',monospace;"><span class="k">if</span><span class="i"> r_mot_pos</span><span class="o">=</span><span class="n">0</span><span class="k"> then</span><span class="i"> r_mot_pos</span><span class="o">=</span><span class="n">4</span></span>
<span class="t" style="left:24.7px;top:356.80px;font-size:5.2px;line-height:7px;font-family:'Liberation Mono',monospace;color:#000;letter-spacing:0.02px">170</span>
<span class="t code" style="left:73.20px;top:355.25px;font-size:8px;line-height:9.0667px;font-family:'Liberation Mono',monospace;"><span class="k">end if</span></span>
<span class="t" style="left:24.7px;top:365.87px;font-size:5.2px;line-height:7px;font-family:'Liberation Mono',monospace;color:#000;letter-spacing:0.02px">171</span>
<span class="t code" style="left:68.40px;top:364.32px;font-size:8px;line-height:9.0667px;font-family:'Liberation Mono',monospace;"><span class="k">readtable</span><span class="i"> r_mot_phase</span><span class="p">,</span><span class="i">r_mot_pos</span><span class="p">,</span><span class="i">r_mot_port</span></span>
<span class="t" style="left:24.7px;top:374.93px;font-size:5.2px;line-height:7px;font-family:'Liberation Mono',monospace;color:#000;letter-spacing:0.02px">172</span>
<span class="t code" style="left:63.60px;top:373.38px;font-size:8px;line-height:9.0667px;font-family:'Liberation Mono',monospace;"><span class="k">else</span></span>
<span class="t" style="left:24.7px;top:384.00px;font-size:5.2px;line-height:7px;font-family:'Liberation Mono',monospace;color:#000;letter-spacing:0.02px">173</span>
<span class="t code" style="left:73.20px;top:382.45px;font-size:8px;line-height:9.0667px;font-family:'Liberation Mono',monospace;"><span class="i">r_mot_port</span><span class="o">=</span><span class="n">0b00001111</span></span>
<span class="t" style="left:24.7px;top:393.07px;font-size:5.2px;line-height:7px;font-family:'Liberation Mono',monospace;color:#000;letter-spacing:0.02px">174</span>
<span class="t code" style="left:63.60px;top:391.52px;font-size:8px;line-height:9.0667px;font-family:'Liberation Mono',monospace;"><span class="k">end if</span></span>
<span class="t" style="left:24.7px;top:402.13px;font-size:5.2px;line-height:7px;font-family:'Liberation Mono',monospace;color:#000;letter-spacing:0.02px">175</span>
<span class="t code" style="left:54.00px;top:400.58px;font-size:8px;line-height:9.0667px;font-family:'Liberation Mono',monospace;"><span class="c">;out left right phase to port</span></span>
<span class="t" style="left:24.7px;top:411.20px;font-size:5.2px;line-height:7px;font-family:'Liberation Mono',monospace;color:#000;letter-spacing:0.02px">176</span>
<span class="t code" style="left:63.60px;top:409.65px;font-size:8px;line-height:9.0667px;font-family:'Liberation Mono',monospace;"><span class="i">portd</span><span class="o">=</span><span class="i">l_mot_port </span><span class="k">and</span><span class="i"> r_mot_port</span></span>
<span class="t" style="left:24.7px;top:420.27px;font-size:5.2px;line-height:7px;font-family:'Liberation Mono',monospace;color:#000;letter-spacing:0.02px">177</span>
<span class="t code" style="left:54.00px;top:418.72px;font-size:8px;line-height:9.0667px;font-family:'Liberation Mono',monospace;"><span class="k">end sub</span></span>
<div style="left:54.00px;top:428.00px;width:961.20px;height:1.00px;background:rgba(0,228,0,0.520);"></div>
<span class="t" style="left:24.7px;top:429.33px;font-size:5.2px;line-height:7px;font-family:'Liberation Mono',monospace;color:#000;letter-spacing:0.02px">178</span>
<span class="t code" style="left:54.00px;top:427.78px;font-size:8px;line-height:9.0667px;font-family:'Liberation Mono',monospace;"><span class="c">;</span></span>
<svg style="left:46.60px;top:75.67px" width="6.4" height="6.4" viewBox="0 0 6.4 6.4"><rect x="0.9" y="0.9" width="4.6" height="4.6" fill="#fff" stroke="#333" stroke-width="0.9"/><path d="M2 3.2 H4.4" stroke="#111" stroke-width="0.8"/></svg>
<svg style="left:46.60px;top:157.27px" width="6.4" height="6.4" viewBox="0 0 6.4 6.4"><rect x="0.9" y="0.9" width="4.6" height="4.6" fill="#fff" stroke="#333" stroke-width="0.9"/><path d="M2 3.2 H4.4" stroke="#111" stroke-width="0.8"/></svg>
<div style="left:49.00px;top:56.60px;width:1.00px;height:8.87px;background:rgba(130,130,130,0.356);"></div>
<div style="left:50.00px;top:56.60px;width:1.00px;height:8.87px;background:rgba(130,130,130,0.056);"></div>
<div style="left:49.60px;top:64.00px;width:3.00px;height:1.00px;background:rgba(130,130,130,0.081);"></div>
<div style="left:49.60px;top:65.00px;width:3.00px;height:1.00px;background:rgba(130,130,130,0.331);"></div>
<div style="left:49.00px;top:81.67px;width:1.00px;height:65.40px;background:rgba(130,130,130,0.356);"></div>
<div style="left:50.00px;top:81.67px;width:1.00px;height:65.40px;background:rgba(130,130,130,0.056);"></div>
<div style="left:49.60px;top:146.00px;width:3.00px;height:1.00px;background:rgba(130,130,130,0.381);"></div>
<div style="left:49.60px;top:147.00px;width:3.00px;height:1.00px;background:rgba(130,130,130,0.032);"></div>
<div style="left:49.00px;top:163.27px;width:1.00px;height:264.87px;background:rgba(130,130,130,0.356);"></div>
<div style="left:50.00px;top:163.27px;width:1.00px;height:264.87px;background:rgba(130,130,130,0.056);"></div>
<div style="left:49.60px;top:427.00px;width:3.00px;height:1.00px;background:rgba(130,130,130,0.330);"></div>
<div style="left:49.60px;top:428.00px;width:3.00px;height:1.00px;background:rgba(130,130,130,0.082);"></div>
<div style="left:63.00px;top:85.40px;width:1.00px;height:52.40px;background:rgba(140,140,140,0.540);"></div>
<div style="left:63.20px;top:85.00px;width:4.60px;height:1.00px;background:rgba(140,140,140,0.540);"></div>
<div style="left:63.20px;top:137.00px;width:4.60px;height:1.00px;background:rgba(140,140,140,0.540);"></div>
<div style="left:63.00px;top:176.07px;width:1.00px;height:106.80px;background:rgba(140,140,140,0.540);"></div>
<div style="left:63.20px;top:176.00px;width:4.60px;height:1.00px;background:rgba(140,140,140,0.540);"></div>
<div style="left:63.20px;top:282.00px;width:4.60px;height:1.00px;background:rgba(140,140,140,0.540);"></div>
<div style="left:72.00px;top:185.13px;width:1.00px;height:61.47px;background:rgba(140,140,140,0.180);"></div>
<div style="left:73.00px;top:185.13px;width:1.00px;height:61.47px;background:rgba(140,140,140,0.360);"></div>
<div style="left:72.80px;top:185.00px;width:4.60px;height:1.00px;background:rgba(140,140,140,0.540);"></div>
<div style="left:72.80px;top:246.00px;width:4.60px;height:1.00px;background:rgba(140,140,140,0.540);"></div>
<div style="left:63.00px;top:293.93px;width:1.00px;height:106.80px;background:rgba(140,140,140,0.540);"></div>
<div style="left:63.20px;top:293.00px;width:4.60px;height:1.00px;background:rgba(140,140,140,0.059);"></div>
<div style="left:63.20px;top:294.00px;width:4.60px;height:1.00px;background:rgba(140,140,140,0.481);"></div>
<div style="left:63.20px;top:400.00px;width:4.60px;height:1.00px;background:rgba(140,140,140,0.540);"></div>
<div style="left:72.00px;top:303.00px;width:1.00px;height:61.47px;background:rgba(140,140,140,0.180);"></div>
<div style="left:73.00px;top:303.00px;width:1.00px;height:61.47px;background:rgba(140,140,140,0.360);"></div>
<div style="left:72.80px;top:303.00px;width:4.60px;height:1.00px;background:rgba(140,140,140,0.540);"></div>
<div style="left:72.80px;top:363.00px;width:4.60px;height:1.00px;background:rgba(140,140,140,0.119);"></div>
<div style="left:72.80px;top:364.00px;width:4.60px;height:1.00px;background:rgba(140,140,140,0.421);"></div>
<div style="left:22.10px;top:436.00px;width:1001.90px;height:11.20px;background:#f0f0f0;"></div>
<svg style="left:24.00px;top:437.60px" width="5" height="6" viewBox="0 0 5 6"><path d="M3.4 0.8 L1.2 3 L3.4 5.2" fill="none" stroke="#b0b0b0" stroke-width="0.7"/></svg>
<svg style="left:1007.60px;top:437.60px" width="5" height="6" viewBox="0 0 5 6"><path d="M1.2 0.8 L3.4 3 L1.2 5.2" fill="none" stroke="#b0b0b0" stroke-width="0.7"/></svg>
<div style="left:503.40px;top:444.50px;width:15.40px;height:2.40px;background:#f8f8f8;"></div>
<div style="left:504.20px;top:445.10px;width:0.90px;height:1.30px;background:#8c8c8c;"></div>
<div style="left:506.33px;top:445.10px;width:0.90px;height:1.30px;background:#8c8c8c;"></div>
<div style="left:508.46px;top:445.10px;width:0.90px;height:1.30px;background:#8c8c8c;"></div>
<div style="left:510.59px;top:445.10px;width:0.90px;height:1.30px;background:#8c8c8c;"></div>
<div style="left:512.72px;top:445.10px;width:0.90px;height:1.30px;background:#8c8c8c;"></div>
<div style="left:514.85px;top:445.10px;width:0.90px;height:1.30px;background:#8c8c8c;"></div>
<div style="left:516.98px;top:445.10px;width:0.90px;height:1.30px;background:#8c8c8c;"></div>
<div style="left:0.00px;top:447.10px;width:1023.40px;height:11.30px;background:linear-gradient(#fbfbfb,#f4f4f4 50%,#e6e6e6);"></div>
<div style="left:0.00px;top:458.00px;width:1023.40px;height:1.00px;background:#bdbdbd;"></div>
<div style="left:1023.20px;top:447.00px;width:0.80px;height:86.00px;background:#e4e4e4;"></div>
<span class="t " style="left:4.30px;top:449.86px;font-size:6.4px;line-height:7.68px;color:#1a1a1a;letter-spacing:0.131px;">Output</span>
<svg style="left:1014.60px;top:450.60px" width="7" height="7" viewBox="0 0 7 7"><path d="M1.3 1.3 L5.2 5.2 M5.2 1.3 L1.3 5.2" stroke="#000" stroke-width="1.3"/></svg>
<div style="left:0.00px;top:458.90px;width:1023.20px;height:74.00px;background:#ffffff;"></div>
<div style="left:0.00px;top:532.90px;width:1024.00px;height:12.00px;background:#f0f0f0;"></div>
<div style="left:0.00px;top:532.70px;width:1024.00px;height:0.60px;background:#d2d2d2;"></div>
<div style="left:70.30px;top:533.20px;width:346.30px;height:11.40px;background:#d9d9d9;"></div>
<div style="left:70.00px;top:533.20px;width:0.60px;height:11.40px;background:#c4c4c4;"></div>
<div style="left:139.30px;top:533.20px;width:0.60px;height:11.40px;background:#c4c4c4;"></div>
<div style="left:208.90px;top:533.20px;width:0.60px;height:11.40px;background:#c4c4c4;"></div>
<div style="left:278.30px;top:533.20px;width:0.60px;height:11.40px;background:#c4c4c4;"></div>
<div style="left:347.20px;top:533.20px;width:0.60px;height:11.40px;background:#c4c4c4;"></div>
<div style="left:416.30px;top:533.20px;width:0.60px;height:11.40px;background:#c4c4c4;"></div>
<div style="left:0.00px;top:544.50px;width:1024.00px;height:0.70px;background:#d8d8d8;"></div>
<span class="t " style="left:3.00px;top:535.26px;font-size:6.4px;line-height:7.68px;color:#1a1a1a;letter-spacing:0.098px;">Output</span>
<span class="t " style="left:72.40px;top:535.26px;font-size:6.4px;line-height:7.68px;color:#1a1a1a;letter-spacing:-0.271px;">Search Results</span>
<span class="t " style="left:141.60px;top:535.26px;font-size:6.4px;line-height:7.68px;color:#1a1a1a;letter-spacing:-0.112px;">Bookmarks</span>
<span class="t " style="left:211.00px;top:535.26px;font-size:6.4px;line-height:7.68px;color:#1a1a1a;letter-spacing:0.056px;">Validation</span>
<span class="t " style="left:280.20px;top:535.26px;font-size:6.4px;line-height:7.68px;color:#1a1a1a;letter-spacing:-0.226px;">Log</span>
<span class="t " style="left:349.80px;top:535.26px;font-size:6.4px;line-height:7.68px;color:#1a1a1a;letter-spacing:-0.126px;">Console</span>
<div style="left:0.00px;top:545.20px;width:1024.00px;height:14.80px;background:#f0f0f0;"></div>
<div style="left:0.00px;top:545.20px;width:1024.00px;height:0.70px;background:#fafafa;"></div>
<div style="left:85.00px;top:548.00px;width:1.00px;height:9.60px;background:#c2c2c2;"></div>
<div style="left:133.00px;top:548.00px;width:1.00px;height:9.60px;background:#c2c2c2;"></div>
<div style="left:153.00px;top:548.00px;width:1.00px;height:9.60px;background:#c2c2c2;"></div>
<div style="left:225.00px;top:548.00px;width:1.00px;height:9.60px;background:#c2c2c2;"></div>
<div style="left:282.00px;top:548.00px;width:1.00px;height:9.60px;background:#c2c2c2;"></div>
<div style="left:297.00px;top:548.00px;width:1.00px;height:9.60px;background:#c2c2c2;"></div>
<div style="left:313.00px;top:548.00px;width:1.00px;height:9.60px;background:#c2c2c2;"></div>
<div style="left:328.00px;top:548.00px;width:1.00px;height:9.60px;background:#c2c2c2;"></div>
<div style="left:352.00px;top:548.00px;width:1.00px;height:9.60px;background:#c2c2c2;"></div>
<div style="left:366.00px;top:548.00px;width:1.00px;height:9.60px;background:#c2c2c2;"></div>
<span class="t " style="left:23.80px;top:548.96px;font-size:6.4px;line-height:7.68px;color:#1a1a1a;letter-spacing:-0.247px;">184 : 10 (189)</span>
<span class="t " style="left:102.50px;top:548.96px;font-size:6.4px;line-height:7.68px;color:#1a1a1a;letter-spacing:-0.185px;">ANSI</span>
<span class="t " style="left:138.20px;top:548.96px;font-size:6.4px;line-height:7.68px;color:#1a1a1a;letter-spacing:-0.141px;">Win</span>
<span class="t " style="left:168.40px;top:548.96px;font-size:6.4px;line-height:7.68px;color:#1a1a1a;letter-spacing:-0.189px;">GreatCowBasic</span>
<span class="t " style="left:242.00px;top:548.96px;font-size:6.4px;line-height:7.68px;color:#1a1a1a;letter-spacing:-0.250px;">#13 0x0D</span>
<span class="t " style="left:333.40px;top:548.96px;font-size:6.4px;line-height:7.68px;color:#1a1a1a;letter-spacing:-0.392px;">100%</span>
<span class="t " style="left:356.40px;top:548.96px;font-size:6.4px;line-height:7.68px;color:#1a1a1a;">2</span>
<div style="left:361.80px;top:555.60px;width:1.60px;height:0.70px;background:#666;"></div>
<svg style="left:286.60px;top:548.80px" width="8" height="8.4" viewBox="0 0 8 8.4"><path d="M2 3.8 V2.6 A1.8 1.8 0 0 1 5.6 2.6 V3.8" fill="none" stroke="#bcbcbc" stroke-width="0.8"/><rect x="0.7" y="3.7" width="6.2" height="4" fill="#d2d2d2" stroke="#bebebe" stroke-width="0.6"/></svg>
<svg style="left:301.20px;top:549.00px" width="8" height="8" viewBox="0 0 8 8"><path d="M0.8 1.2 H6.6 M0.8 3.6 H5 M0.8 6 H6.6" stroke="#48489c" stroke-width="1"/></svg>
<svg style="left:317.60px;top:549.40px" width="8" height="7" viewBox="0 0 8 7"><path d="M0.8 2.8 L2.6 1.4 H7.4 L6 2.8 Z" fill="#8484cc"/><rect x="0.8" y="2.8" width="5.2" height="2.8" fill="#5c5cb0"/><path d="M6 2.8 L7.4 1.4 V4.2 L6 5.6 Z" fill="#4c4ca4"/></svg>
<div style="left:0.00px;top:560.00px;width:1024.00px;height:16.00px;background:linear-gradient(90deg,#3d342a 0%,#41382e 30%,#483d32 55%,#453b30 75%,#40372d 100%);"></div>
<div style="left:0.00px;top:559.00px;width:1024.00px;height:1.00px;background:#fbfbfb;"></div>
<div style="left:0.00px;top:560.00px;width:19.00px;height:16.00px;background:#3a3128;"></div>
<svg style="left:5.00px;top:563.60px" width="9.4" height="9.4" viewBox="0 0 9.4 9.4"><path d="M0 1.3 L3.9 0.7 V4.4 H0 Z M4.5 0.6 L9.2 0 V4.4 H4.5 Z M0 5 H3.9 V8.7 L0 8.1 Z M4.5 5 H9.2 V9.4 L4.5 8.8 Z" fill="#ffffff"/></svg>
<div style="left:19.00px;top:560.00px;width:138.00px;height:16.00px;background:#f2f2f2;"></div>
<svg style="left:24.60px;top:563.40px" width="8" height="9" viewBox="0 0 8 9"><circle cx="5" cy="3.4" r="2.5" fill="none" stroke="#333" stroke-width="0.8"/><path d="M3.2 5.2 L0.8 8" stroke="#333" stroke-width="0.9"/></svg>
<span class="t " style="left:40.80px;top:563.60px;font-size:8px;line-height:9.60px;color:#3a3a3a;letter-spacing:-0.291px;">Search</span>
<svg style="left:127.00px;top:561.00px" width="30" height="15" viewBox="0 0 30 15"><circle cx="6" cy="4" r="2.4" fill="#9a86e0"/><circle cx="10.4" cy="5.4" r="2.2" fill="#a896e8"/><circle cx="7" cy="9" r="2.4" fill="#9486d8"/><circle cx="6.2" cy="4.2" r="0.8" fill="#e8c040"/><circle cx="7" cy="9" r="0.8" fill="#e8c040"/><path d="M9 9 L12 15 M10 10 L14 14" stroke="#5c9a44" stroke-width="1"/><ellipse cx="20.4" cy="4.2" rx="3.6" ry="1.9" fill="#4a9cf0"/><ellipse cx="21" cy="10.6" rx="4.4" ry="2.8" fill="#3a84e8"/><ellipse cx="20.6" cy="9.8" rx="2.6" ry="1.2" fill="#86c0ff"/></svg>
<svg style="left:163.00px;top:563.00px" width="10" height="11" viewBox="0 0 10 11"><rect x="1.4" y="2.2" width="7.2" height="7.4" rx="1" fill="#fafafa"/><path d="M3.4 2.2 V1.2 H6.6 V2.2" fill="none" stroke="#6cc8e8" stroke-width="0.7"/><rect x="3" y="4" width="1.8" height="1.8" fill="#f25022"/><rect x="5.2" y="4" width="1.8" height="1.8" fill="#7fba00"/><rect x="3" y="6.2" width="1.8" height="1.8" fill="#00a4ef"/><rect x="5.2" y="6.2" width="1.8" height="1.8" fill="#ffb900"/></svg>
<svg style="left:183.00px;top:563.00px" width="10" height="11" viewBox="0 0 10 11"><rect x="1" y="0.8" width="8" height="6.6" rx="0.6" fill="#c8c8c8"/><rect x="1.8" y="1.6" width="6.4" height="4.8" fill="#38402c"/><path d="M2.4 4 H7.6" stroke="#78c040" stroke-width="0.8"/><path d="M4.2 7.4 H5.8 V8.8 H7 V9.6 H3 V8.8 H4.2 Z" fill="#b8b8b8"/></svg>
<svg style="left:202.50px;top:563.00px" width="10" height="11" viewBox="0 0 10 11"><path d="M1.6 7 V4.8 A3.4 3.4 0 0 1 8.4 4.8 V7" fill="none" stroke="#1028d8" stroke-width="1.3"/><rect x="0.8" y="5.4" width="1.8" height="3.4" rx="0.6" fill="#1028d8"/><rect x="7.4" y="5.4" width="1.8" height="3.4" rx="0.6" fill="#1028d8"/><circle cx="5" cy="6.4" r="2.2" fill="#f08020"/><circle cx="5" cy="6.4" r="1" fill="#f8c040"/></svg>
<svg style="left:222.00px;top:563.00px" width="10" height="11" viewBox="0 0 10 11"><rect x="1" y="2" width="8" height="7" rx="1" fill="#e8e8e8"/><rect x="2.6" y="3" width="4.8" height="5" fill="#181818"/><rect x="3.8" y="4.2" width="2.4" height="2.4" fill="#e01010"/></svg>
<svg style="left:242.00px;top:563.00px" width="10" height="11" viewBox="0 0 10 11"><rect x="1" y="0.8" width="8" height="6.6" rx="0.6" fill="#c8c8c8"/><rect x="1.8" y="1.6" width="6.4" height="4.8" fill="#38402c"/><path d="M2.4 4 H7.6" stroke="#78c040" stroke-width="0.8"/><path d="M4.2 7.4 H5.8 V8.8 H7 V9.6 H3 V8.8 H4.2 Z" fill="#b8b8b8"/></svg>
<svg style="left:261.50px;top:563.00px" width="10" height="11" viewBox="0 0 10 11"><path d="M1.6 4.4 L4 2.2 V9 H1.6 Z" fill="#18a8e0"/><path d="M4 2.2 H8.2 V9.4 H6.2 V4.2 H4 Z" fill="#30c0f0"/></svg>
<svg style="left:281.00px;top:563.00px" width="10" height="11" viewBox="0 0 10 11"><rect x="2" y="1" width="6" height="5.6" fill="#e8d020"/><rect x="3.2" y="2" width="3.6" height="3.4" fill="#605818"/><path d="M1 8.8 L2 6.6 H8 L9 8.8 Z" fill="#d0d0d0"/></svg>
<svg style="left:301.00px;top:563.00px" width="10" height="11" viewBox="0 0 10 11"><circle cx="5" cy="5.4" r="4.2" fill="#e8402c"/><path d="M5 5.4 L1.4 3.2 A4.2 4.2 0 0 0 4 9.5 Z" fill="#2ca84c"/><path d="M5 5.4 L4 9.5 A4.2 4.2 0 0 0 9.1 4.4 Z" fill="#f8c81c"/><circle cx="5" cy="5.4" r="1.9" fill="#fff"/><circle cx="5" cy="5.4" r="1.4" fill="#4688f0"/></svg>
<svg style="left:320.60px;top:563.00px" width="10" height="11" viewBox="0 0 10 11"><ellipse cx="4.4" cy="6" rx="3.6" ry="3" fill="#d8e4f0"/><circle cx="3" cy="5.4" r="0.8" fill="#e04030"/><circle cx="4.6" cy="4.4" r="0.8" fill="#40a040"/><circle cx="3.4" cy="7.4" r="0.8" fill="#3060e0"/><path d="M7.6 1.6 L8.6 2 L7.2 9 L6.2 8.8 Z" fill="#e89030"/></svg>
<svg style="left:340.00px;top:563.00px" width="10" height="11" viewBox="0 0 10 11"><path d="M1.4 3 L4.4 4.2 L3.4 5.2 Z" fill="#2890d0"/><path d="M4.6 2.4 L8.6 3.4 V8.4 L6 8.6 Z" fill="#2890d0"/><path d="M4.8 2.6 L6 8.4" stroke="#41382e" stroke-width="0.7"/></svg>
<svg style="left:359.50px;top:563.00px" width="10" height="11" viewBox="0 0 10 11"><rect x="2" y="0.8" width="5" height="4.4" fill="#e8ecf8"/><rect x="2.8" y="1.6" width="3.4" height="2.6" fill="#3050e0"/><rect x="1.4" y="5.4" width="6" height="1.8" fill="#2038d0"/><rect x="5.6" y="7" width="3.8" height="2.4" fill="#1830c0"/><rect x="6.2" y="7.4" width="2.6" height="1.2" fill="#c8d0f0"/></svg>
<svg style="left:380.00px;top:563.00px" width="10" height="11" viewBox="0 0 10 11"><rect x="0.8" y="1.4" width="8.4" height="7.8" fill="#f8f8f8"/><path d="M1.6 3 L2.4 2.4 H8 L8.4 3 V5 H7.8 V6.4 H7 V5.2 H4 V6.4 H3.2 V4.8 L1.8 4.2 Z" fill="#0a0a0a"/><rect x="1.6" y="7" width="6.8" height="1.6" fill="#222"/></svg>
<svg style="left:399.70px;top:563.00px" width="10" height="11" viewBox="0 0 10 11"><ellipse cx="5" cy="5.4" rx="4" ry="4.4" fill="#e8101c"/><ellipse cx="5" cy="5.4" rx="1.8" ry="3.2" fill="#453b30"/></svg>
<svg style="left:419.50px;top:563.00px" width="10" height="11" viewBox="0 0 10 11"><path d="M1 2 H4 L4.8 3 H9 V9 H1 Z" fill="#e8a820"/><path d="M1 4 H9 V9 H1 Z" fill="#f8d058"/><rect x="3.4" y="6" width="3.2" height="3" fill="#3890e0"/></svg>
<svg style="left:439.00px;top:563.00px" width="10" height="11" viewBox="0 0 10 11"><path d="M1.2 1.6 H8.8 V5.6 Q8.8 8.4 5 9.8 Q1.2 8.4 1.2 5.6 Z" fill="#2898e8"/><path d="M3.4 6 A2 2 0 1 1 6.4 6.4" fill="none" stroke="#a8d8f8" stroke-width="0.7"/></svg>
<div style="left:454.00px;top:560.00px;width:19.60px;height:16.00px;background:#625a51;"></div>
<svg style="left:459.00px;top:563.00px" width="10" height="11" viewBox="0 0 10 11"><path d="M1 3 L2 2.2 H8.4 L9.2 3 V5.2 H8.4 V7.6 H7.4 V5.6 H4 V7.6 H3 V5 L1.4 4.4 Z" fill="#0a0a0a"/></svg>
<div style="left:378.00px;top:575.00px;width:14.50px;height:1.00px;background:#f2e2b8;"></div>
<div style="left:397.00px;top:575.00px;width:15.00px;height:1.00px;background:#f2e2b8;"></div>
<div style="left:437.00px;top:575.00px;width:15.00px;height:1.00px;background:#f2e2b8;"></div>
<div style="left:454.60px;top:575.00px;width:18.60px;height:1.00px;background:#f2e2b8;"></div>
<svg style="left:950.00px;top:563.00px" width="24" height="10" viewBox="0 0 24 10"><path d="M3 6.6 L5.6 4 L8.2 6.6" fill="none" stroke="#f0f0f0" stroke-width="0.8"/><rect x="15.4" y="1.6" width="7" height="4.6" fill="none" stroke="#f0f0f0" stroke-width="0.8"/><path d="M17 8.6 H21 M19 6.2 V8.6" stroke="#f0f0f0" stroke-width="0.8"/><rect x="14" y="1" width="2.4" height="3.6" fill="#f0f0f0"/></svg>
<span class="t " style="left:978.00px;top:563.88px;font-size:6.2px;line-height:7.44px;color:#ffffff;letter-spacing:-0.183px;">15:53</span>
<svg style="left:1001.00px;top:563.00px" width="11" height="10" viewBox="0 0 11 10"><path d="M1.2 0.8 H9.8 V6.8 H6.6 L5.5 8.2 L4.4 6.8 H1.2 Z" fill="none" stroke="#f0f0f0" stroke-width="0.8"/></svg>
<div style="left:1021.20px;top:560.20px;width:0.60px;height:15.80px;background:#8a8278;"></div>
<div style="left:355.00px;top:181.00px;width:313.00px;height:195.00px;background:#f0f0f0;border:1px solid #a08c66;box-shadow:0.5px 2px 8px 1px rgba(0,0,0,0.27);"></div>
<div style="left:355.00px;top:180.60px;width:313.00px;height:15.80px;background:#5b431a;"></div>
<svg style="left:361.00px;top:184.60px" width="9" height="7" viewBox="0 0 9 7"><path d="M0.3 1.4 L1.2 0.8 H7.6 L8.4 1.6 V3.4 H7.8 V5.8 H6.8 V4.4 H3.6 V5.8 H2.6 V4 L0.8 3.4 Z" fill="#0c0c0c"/></svg>
<span class="t " style="left:371.30px;top:184.66px;font-size:6.4px;line-height:7.68px;color:#ffffff;letter-spacing:-0.196px;">Preferences 1.04</span>
<svg style="left:655.60px;top:184.60px" width="8" height="8" viewBox="0 0 8 8"><path d="M1.2 1.2 L6.8 6.8 M6.8 1.2 L1.2 6.8" stroke="#ffffff" stroke-width="0.7"/></svg>
<div style="left:360.00px;top:212.00px;width:301.00px;height:142.00px;background:#ffffff;border:1px solid #e2e2e2;"></div>
<div style="left:400.00px;top:202.60px;width:27.60px;height:9.20px;background:#f0f0f0;border:0.6px solid #d6d6d6;border-bottom:none;"></div>
<div style="left:427.50px;top:202.60px;width:41.20px;height:9.20px;background:#f0f0f0;border:0.6px solid #d6d6d6;border-bottom:none;"></div>
<div style="left:360.80px;top:201.00px;width:39.40px;height:11.40px;background:#ffffff;border:0.6px solid #dcdcdc;border-bottom:none;"></div>
<span class="t " style="left:364.20px;top:203.06px;font-size:5.9px;line-height:7.08px;color:#111;letter-spacing:-0.285px;">Programmers</span>
<span class="t " style="left:403.00px;top:203.96px;font-size:5.9px;line-height:7.08px;color:#111;letter-spacing:-0.251px;">Compiler</span>
<span class="t " style="left:431.00px;top:203.96px;font-size:5.9px;line-height:7.08px;color:#111;letter-spacing:-0.102px;">Tool Variables</span>
<div style="left:366.20px;top:217.40px;width:289.80px;height:112.20px;background:#ffffff;border:1px solid #a4aab2;"></div>
<div style="left:646.20px;top:218.10px;width:9.10px;height:110.80px;background:#f0f0f0;"></div>
<div style="left:646.80px;top:273.00px;width:7.00px;height:39.20px;background:#cdcdcd;"></div>
<svg style="left:647.40px;top:220.80px" width="6" height="5" viewBox="0 0 6 5"><path d="M0.9 3.6 L2.9 1.5 L4.9 3.6" fill="none" stroke="#333" stroke-width="1"/></svg>
<svg style="left:647.40px;top:322.20px" width="6" height="5" viewBox="0 0 6 5"><path d="M0.9 1.3 L2.9 3.4 L4.9 1.3" fill="none" stroke="#333" stroke-width="1"/></svg>
<span class="t " style="left:368.40px;top:218.28px;font-size:5.87px;line-height:7.04px;color:#111;">AVR ISP XPII [KANDA]</span>
<span class="t " style="left:368.40px;top:225.23px;font-size:5.87px;line-height:7.04px;color:#111;">Arduino Nano/ProMini 168p@19200</span>
<span class="t " style="left:368.40px;top:232.18px;font-size:5.87px;line-height:7.04px;color:#111;">Arduino Mega2560</span>
<span class="t " style="left:368.40px;top:239.13px;font-size:5.87px;line-height:7.04px;color:#111;">Arduino Leonardo/Robot</span>
<span class="t " style="left:368.40px;top:246.08px;font-size:5.87px;line-height:7.04px;color:#111;">Avrdude (Stk500V2 @115200)</span>
<span class="t " style="left:368.40px;top:253.03px;font-size:5.87px;line-height:7.04px;color:#111;">Avrdude (USBASP for 1Mhz devices)</span>
<span class="t " style="left:368.40px;top:259.98px;font-size:5.87px;line-height:7.04px;color:#111;">Avrdude (USBASP max speed)</span>
<span class="t " style="left:368.40px;top:266.93px;font-size:5.87px;line-height:7.04px;color:#111;">Avrdude (USBtinyISP)</span>
<span class="t " style="left:368.40px;top:273.88px;font-size:5.87px;line-height:7.04px;color:#111;">IC-Prog</span>
<span class="t " style="left:368.40px;top:280.83px;font-size:5.87px;line-height:7.04px;color:#111;">eLabtronics USB programmer</span>
<span class="t " style="left:368.40px;top:287.78px;font-size:5.87px;line-height:7.04px;color:#111;">Atmel STK600</span>
<span class="t " style="left:368.40px;top:294.73px;font-size:5.87px;line-height:7.04px;color:#111;">PicPgm 5PiP @COM1</span>
<span class="t " style="left:368.40px;top:301.68px;font-size:5.87px;line-height:7.04px;color:#111;">PicPgm autodetect</span>
<span class="t " style="left:368.40px;top:308.63px;font-size:5.87px;line-height:7.04px;color:#111;">PICKit+ CmdAuto [Power On and Off]</span>
<span class="t " style="left:368.40px;top:315.58px;font-size:5.87px;line-height:7.04px;color:#111;">PICKit+ Cmd3v3 [Maintain Power @ 3v3]</span>
<span class="t " style="left:368.40px;top:322.53px;font-size:5.87px;line-height:7.04px;color:#111;">PICKit+ Cmd5v0 with UserID [Maintain Power @ 5v0]</span>
<div style="left:441.00px;top:337.00px;width:46.00px;height:12.00px;background:#e1e1e1;border:1px solid #bdbdbd;"></div>
<span class="t " style="left:456.80px;top:339.32px;font-size:6.3px;line-height:7.56px;color:#111;letter-spacing:-0.343px;">Add...</span>
<div style="left:488.00px;top:337.00px;width:46.00px;height:12.00px;background:#cccccc;border:1px solid #c4c4c4;"></div>
<span class="t " style="left:504.10px;top:339.32px;font-size:6.3px;line-height:7.56px;color:#8c8c8c;letter-spacing:-0.330px;">Edit...</span>
<div style="left:535.00px;top:337.00px;width:46.00px;height:12.00px;background:#cccccc;border:1px solid #c4c4c4;"></div>
<span class="t " style="left:550.00px;top:339.32px;font-size:6.3px;line-height:7.56px;color:#8c8c8c;letter-spacing:-0.369px;">Delete</span>
<div style="left:469.00px;top:360.00px;width:41.00px;height:11.00px;background:#e1e1e1;border:1px solid #0078d7;"></div>
<span class="t " style="left:485.20px;top:361.82px;font-size:6.3px;line-height:7.56px;color:#111;letter-spacing:-0.251px;">OK</span>
<div style="left:469.00px;top:360.00px;width:41.00px;height:11.00px;border:1px solid #1a80d9;"></div>
<div style="left:516.00px;top:360.00px;width:41.00px;height:11.00px;background:#e1e1e1;border:1px solid #bdbdbd;"></div>
<span class="t " style="left:527.30px;top:361.82px;font-size:6.3px;line-height:7.56px;color:#111;letter-spacing:-0.202px;">Cancel</span>
<div style="left:665.40px;top:372.80px;width:0.80px;height:0.80px;background:#b8b8b8;"></div>
<div style="left:663.80px;top:372.80px;width:0.80px;height:0.80px;background:#b8b8b8;"></div>
<div style="left:665.40px;top:371.20px;width:0.80px;height:0.80px;background:#b8b8b8;"></div>
<div style="left:662.20px;top:372.80px;width:0.80px;height:0.80px;background:#b8b8b8;"></div>
<div style="left:665.40px;top:369.60px;width:0.80px;height:0.80px;background:#b8b8b8;"></div>
<div style="left:663.80px;top:371.20px;width:0.80px;height:0.80px;background:#b8b8b8;"></div>
</body></html>
